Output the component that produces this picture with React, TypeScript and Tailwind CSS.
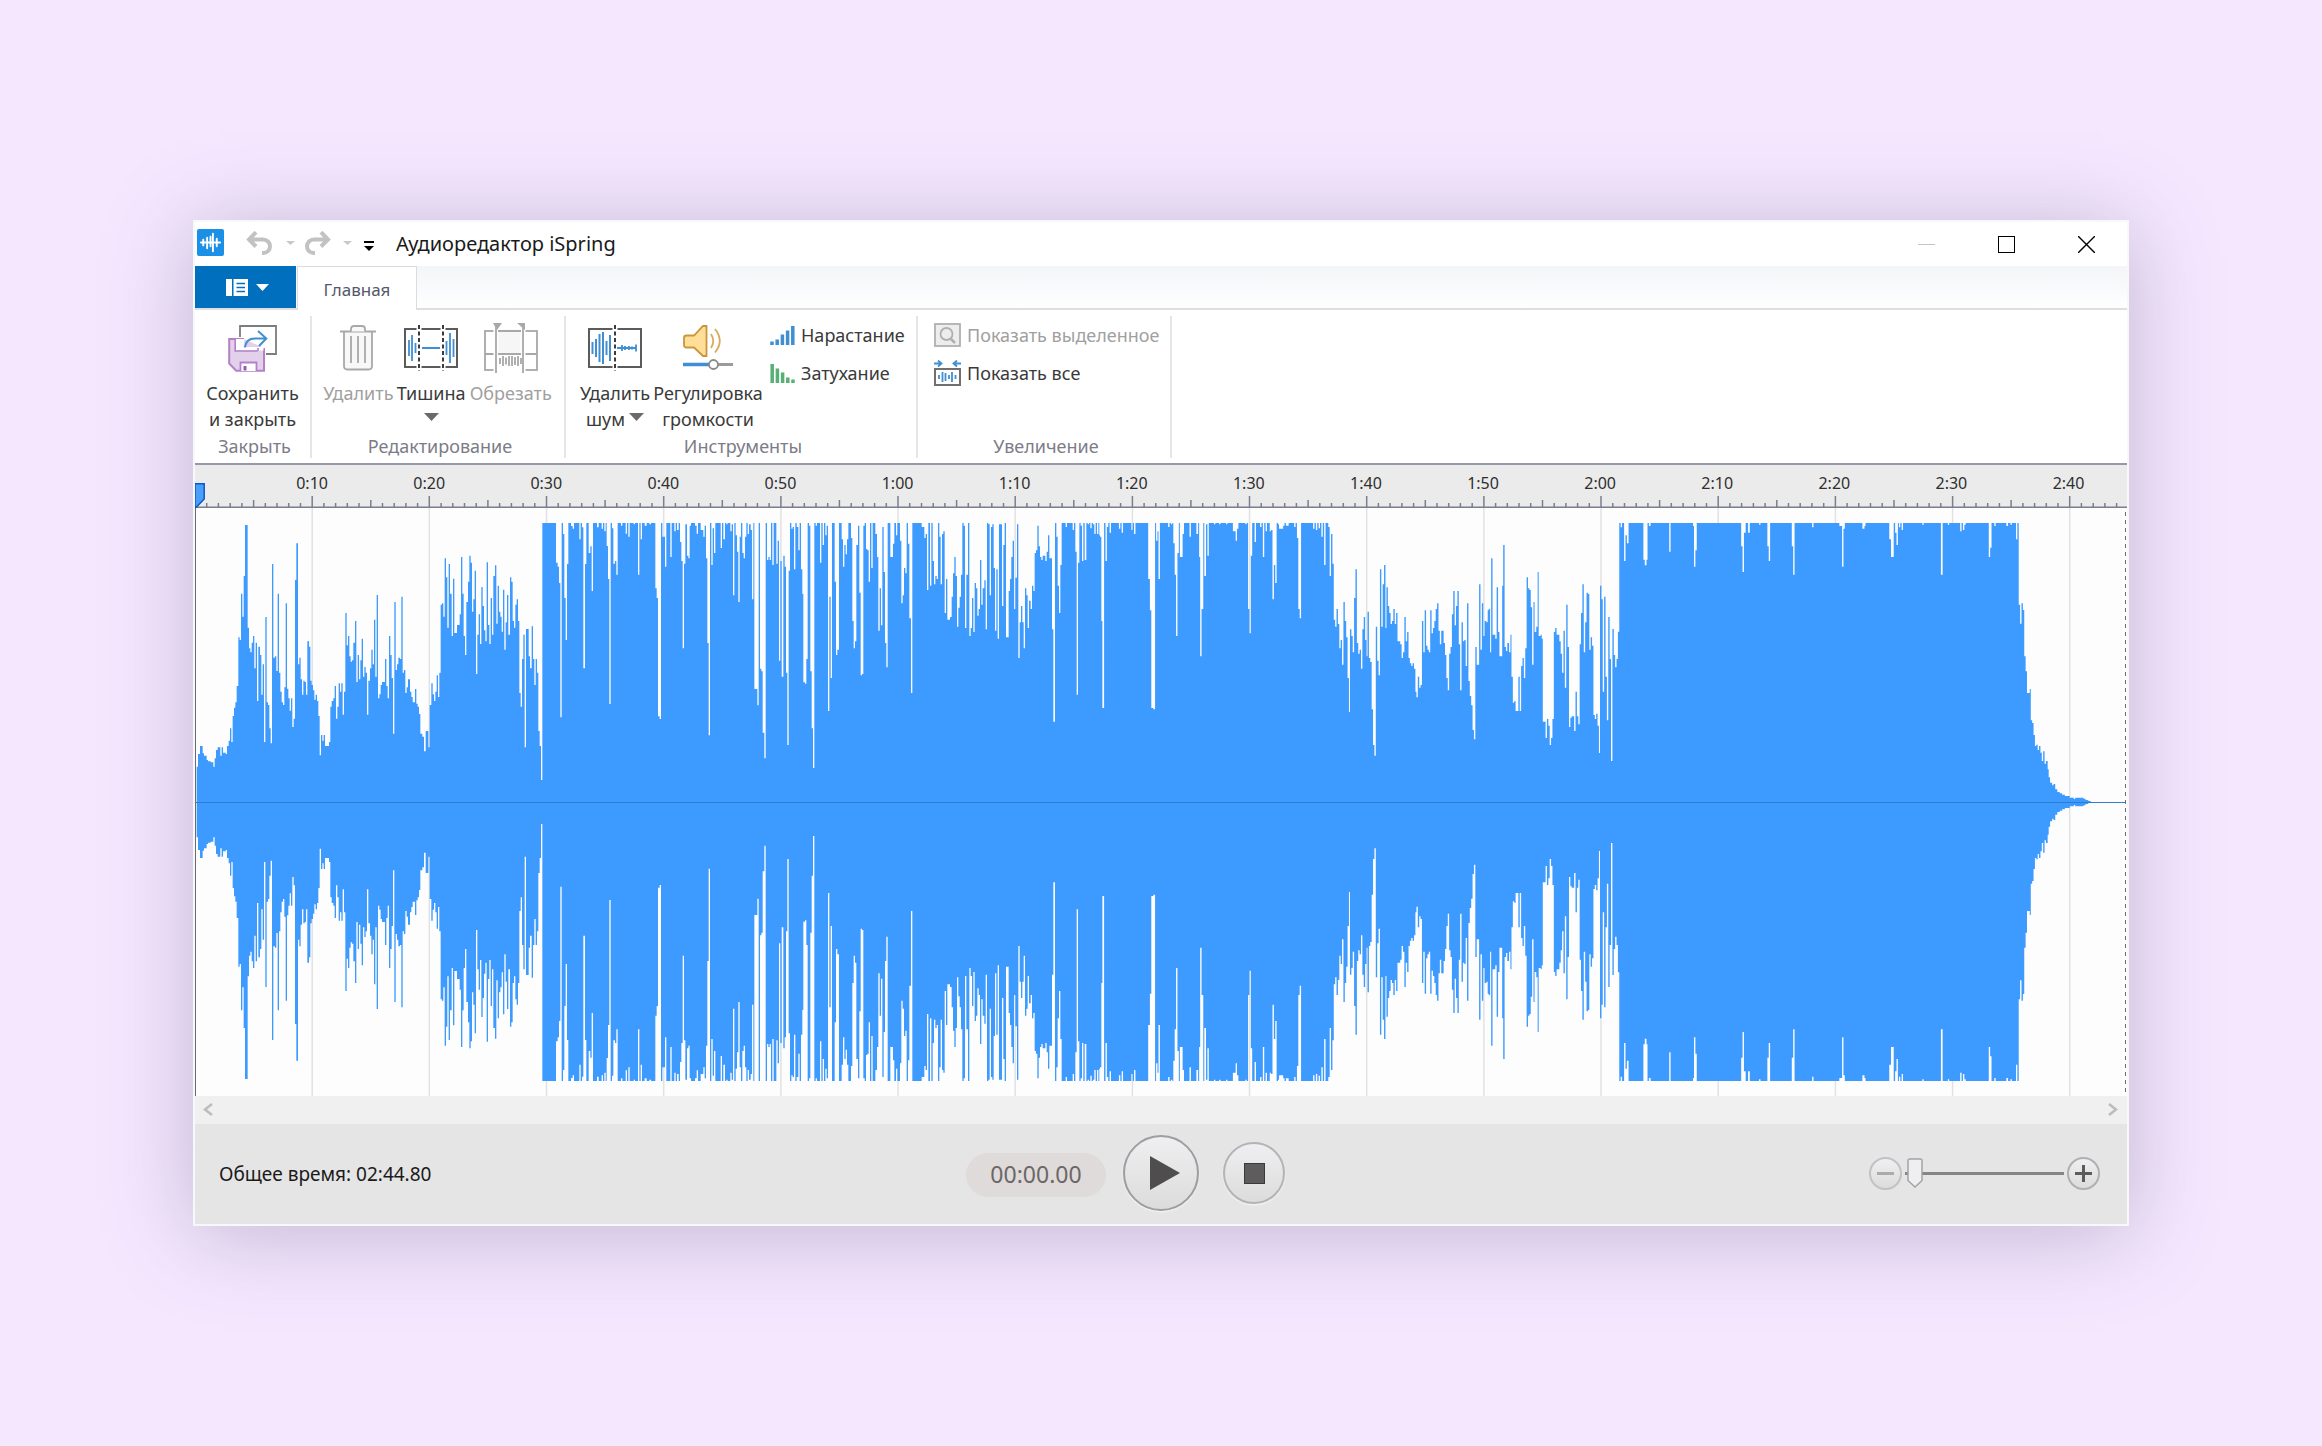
import { useState } from 'react';
import type { ReactNode } from 'react';
import clsx from 'clsx';

const DURATION = 164.8;
const WAVE_WIDTH = 1932;
const WAVE_HEIGHT = 588;
const PX_PER_SECOND = 11.717;
const CLIP_Y = 15;
const CENTER_Y = 294;

// Peaks are cached in blocks. Points are "x y" pairs; y grows from the clip level (top) to silence.
const PEAK_BLOCKS = [
  {
    start: -15,
    perPixel: 3,
    top: 249,
    points:
      '50 980 54 942 60 918 68 940 72 947 80 960 84 964 92 967 100 980 104 955 108 930 113 922 121 947 125 922 129 938 137 942 141 918 146 902 150 865 154 906 158 828 162 803 166 787 170 738 175 592 179 600 183 461 187 530 191 408 195 255 203 563 207 625 211 637 215 608 219 588 223 685 227 608 231 783 235 620 240 645 244 764 248 673 252 906 256 531 260 787 264 795 268 865 272 910 276 372 280 653 285 649 289 693 293 461 297 698 301 755 305 787 309 795 313 742 317 490 321 746 325 775 329 812 333 775 337 861 341 836 345 420 349 310 354 673 358 653 362 718 366 764 370 722 374 726 378 764 382 604 387 620 391 722 395 735 399 751 403 779 407 764 411 783 415 828 419 946 423 885 427 902 431 885 435 918 447 906 451 800 455 783 460 775 464 738 468 836 472 800 476 730 480 755 484 730 488 824 492 755 496 519 500 616 504 588 508 649 512 665 516 661 520 608 525 543 529 726 533 645 537 718 541 661 545 596 549 710 553 681 557 698 561 824 565 722 570 685 574 629 578 673 582 539 586 710 590 465 594 775 598 763 602 735 606 726 615 657 619 738 623 775 627 588 631 645 635 714 639 881 643 486 647 690 651 673 655 653 660 657 664 470 668 698 672 690 676 759 680 742 684 718 690 755 694 771 698 787 705 747 709 791 713 800 717 822 721 881 727 890 732 934 737 873 745 922 749 795 754 730 758 763 762 783 766 755 770 706 774 771 778 698 782 494 786 490 790 530 794 355 798 412 802 563 806 372 810 461 815 588 819 416 823 579 831 555 839 523 843 351 847 461 851 588 855 645 859 486 864 425 868 347 872 368 876 515 880 478 884 392 888 702 892 584 896 523 900 612 904 441 908 498 912 571 916 604 920 367 924 555 928 612 932 474 936 584 940 408 945 376 949 551 953 437 957 515 961 530 965 575 969 449 973 629 977 547 981 465 985 584 990 412 994 425 998 543 1002 563 1006 494 1010 478 1014 543 1018 759 1022 800 1026 657 1030 584 1034 922 1038 567 1046 649 1050 685 1055 559 1059 657 1063 735 1067 657 1071 698 1075 873 1079 918 1083 1020 1087 249 1128 368 1133 380 1137 429 1141 832 1145 249 1149 282 1153 474 1157 600 1161 372 1165 249 1173 258 1178 266 1182 249 1198 298 1202 249 1206 262 1210 685 1215 372 1219 249 1226 339 1231 319 1235 453 1239 249 1251 262 1256 249',
  },
  {
    start: 385,
    perPixel: 3,
    top: 69,
    points:
      '65 86 69 69 73 94 77 69 80 138 84 237 88 612 92 69 96 85 100 191 105 183 109 224 113 69 123 77 127 69 137 101 141 69 145 110 149 69 161 73 165 69 174 224 178 69 182 118 186 69 194 77 200 69 208 73 213 69 226 265 230 294 234 649 239 657 243 69 247 110 255 200 259 69 271 171 275 69 283 94 287 69 291 90 296 69 300 126 304 183 308 445 312 191 316 73 321 167 325 175 329 77 333 69 345 77 350 101 354 69 362 90 370 110 374 77 378 175 382 429 386 706 390 69 394 195 398 85 402 159 406 69 422 144 426 69 430 118 435 69 439 73 443 69 451 94 455 73 459 286 463 69 467 106 471 155 475 306 479 110 483 69 487 159 491 175 495 110 499 69 503 102 507 73 512 90 516 298 520 69 523 567 532 616 536 69 540 506 544 514 548 698 553 775 557 69 561 180 565 171 569 180 573 69 577 195 581 69 589 191 593 122 597 482 601 183 605 530 610 167 614 200 618 518 622 735 626 212 630 69 634 86 638 81 642 208 646 69 650 81 655 151 659 69 663 208 667 282 670 547 675 551 679 477 683 69 687 77 691 514 695 685 699 804 703 69 707 77 711 69 720 188 724 69 728 135 732 69 736 106 740 77 744 633 748 290 752 534 756 69 764 245 768 465 772 449 777 69 785 118 789 200 793 135 797 163 801 118 805 69 813 114 817 363 821 445 825 424 829 135 834 77 838 278 842 526 846 522 850 77 854 69 858 147 862 151 866 245 870 69 874 204 878 69 886 102 891 171 895 392 899 265 903 376 907 81 911 216 915 429 919 502 923 69 931 171 939 131 943 69 948 106 952 69 960 122 964 310 968 286 972 204 976 220 980 69 984 131 988 355 993 579 997 69 1025 81 1033 114 1037 102 1041 270 1045 69 1050 257 1054 69 1058 183 1062 253 1066 228 1070 237 1074 69 1078 110 1082 253 1086 102 1090 94 1094 339 1098 237 1102 359 1110 351 1115 290 1119 220 1123 171 1127 228 1131 380 1135 323 1139 290 1143 224 1147 69 1151 77 1155 384 1159 224 1164 69 1168 408 1172 384 1176 294 1180 396 1184 249 1188 265 1192 347 1196 327 1200 180 1204 314 1208 265 1213 241 1217 388 1221 69 1225 73 1229 286 1233 81 1237 73 1241 204 1245 392 1249 208 1253 416 1257 73 1266 318 1270 135 1274 69 1278 412 1286 273 1290 237 1294 171 1298 122 1302 327 1306 233 1311 73 1315 474 1319 367 1323 318 1327 367 1331 445 1335 265 1339 286 1343 384 1347 302 1352 327 1356 257 1360 273 1364 159 1368 151 1372 77 1376 139 1380 171 1384 180 1388 167 1396 183 1400 155 1404 106 1408 175 1416 388 1420 665 1425 69 1429 110 1433 257 1437 339 1441 195 1445 69 1457 81 1461 69 1478 90 1482 69 1486 155 1490 584 1494 188 1498 69 1502 77 1506 183 1510 69 1514 180 1519 69 1523 73 1527 69 1531 85 1535 69 1539 73 1543 102 1547 69 1551 102 1555 69 1558 106',
  },
  {
    start: 885,
    perPixel: 2.904,
    top: 69,
    points:
      '58 110 62 363 65 624 70 69 74 183 78 81 82 69 86 98 90 69 113 86 117 69 121 98 125 69 149 90 153 69 157 102 161 69 198 237 203 331 207 624 213 628 218 69 221 122 225 94 228 237 232 69 256 81 260 69 264 73 268 69 271 130 275 224 279 408 283 159 287 69 290 171 298 102 302 69 318 110 322 69 338 102 343 69 346 171 349 469 353 327 358 69 361 228 366 73 370 167 374 69 389 73 393 69 404 73 408 69 424 73 428 69 444 94 452 122 456 86 460 69 480 73 484 69 488 327 492 400 496 167 500 69 507 126 511 69 523 81 527 69 531 171 535 69 539 94 543 69 551 94 555 90 559 298 563 195 567 249 571 69 575 73 578 86 590 77 594 69 598 77 606 69 622 81 626 69 630 114 634 327 638 355 642 69 677 86 681 69 685 90 689 69 693 85 697 69 701 110 705 69 709 195 713 69 721 81 725 228 729 102 733 191 737 359 741 380 745 327 749 372 753 445 757 420 761 494 765 306 769 363 773 412 777 534 781 636 784 388 788 408 792 457 796 294 800 208 804 429 808 461 812 449 816 506 820 388 824 351 828 420 832 469 835 335 839 474 843 486 847 628 851 735 855 767 859 380 863 482 867 526 871 208 875 380 879 253 883 195 887 384 890 262 894 318 898 339 902 372 906 363 910 327 914 372 918 339 922 424 930 433 934 474 938 457 942 351 946 424 950 396 954 474 958 490 962 498 966 490 970 506 974 575 977 592 981 530 985 563 989 555 993 363 997 457 1001 331 1005 437 1009 449 1013 457 1017 331 1021 400 1025 384 1029 363 1033 327 1037 310 1041 392 1045 433 1049 392 1056 429 1060 465 1064 534 1068 571 1072 461 1076 441 1080 343 1084 273 1088 376 1092 318 1096 273 1100 433 1104 571 1108 367 1112 424 1116 420 1120 498 1124 310 1128 543 1132 588 1136 616 1140 690 1144 718 1148 441 1152 494 1159 253 1163 449 1167 310 1171 408 1175 363 1180 367 1184 331 1187 327 1191 457 1194 175 1198 404 1206 416 1210 262 1214 396 1218 469 1226 257 1229 135 1233 441 1237 453 1241 429 1246 457 1250 404 1253 530 1257 608 1261 604 1265 633 1273 530 1277 633 1281 498 1285 474 1289 534 1293 445 1297 232 1301 265 1305 270 1309 322 1313 494 1317 306 1320 396 1325 380 1329 216 1332 408 1338 404 1341 416 1344 665 1352 714 1356 657 1360 677 1364 735 1368 714 1372 657 1376 396 1380 384 1384 404 1392 424 1396 461 1400 518 1404 392 1408 563 1412 314 1416 441 1420 681 1424 653 1428 649 1435 693 1439 575 1443 649 1447 673 1451 433 1455 339 1459 253 1463 457 1467 367 1471 278 1475 282 1479 449 1483 412 1487 437 1491 645 1495 657 1499 641 1503 677 1507 759',
  },
  {
    start: 1405,
    perPixel: 2.904,
    top: 249,
    points:
      '0 437 4 478 8 755 12 470 16 710 20 841 24 531 28 657 32 963 36 567 40 645 44 682 48 657 52 575 56 249 60 262 64 249 70 363 74 286 78 310 83 249 126 359 130 376 135 359 138 249 142 258 147 249 201 335 205 249 270 258 273 380 277 331 281 249 410 319 414 396 418 278 423 249 430 278 435 249 462 254 466 249 486 319 490 363 494 249 557 319 561 404 565 249 616 262 620 249 695 258 703 380 707 266 711 249 762 266 768 258 771 249 840 298 845 351 853 249 857 278 861 315 865 249 868 262 872 249 876 270 880 249 936 254 940 249 990 404 995 249 1010 254 1014 249 1046 274 1050 249 1054 270 1058 254 1062 249 1129 351 1133 323 1137 249 1145 258 1149 249 1180 258 1185 249 1192 254 1196 249 1208 298 1212 249 1216 494 1220 551 1224 490 1228 510 1232 649 1236 694 1240 759 1248 747 1251 841 1255 849 1259 885 1263 918 1267 914 1271 930 1275 918 1279 938 1283 963 1287 934 1291 971 1295 963 1300 988 1303 1012 1307 1028 1313 1036 1317 1032 1322 1048 1328 1056 1335 1060 1342 1064 1350 1068 1364 1073 1376 1077 1380 1073 1404 1076 1410 1080 1418 1083 1425 1087',
  },
];

const buildWavePath = (direction: 1 | -1) => {
  let d = '';
  for (const block of PEAK_BLOCKS) {
    const values = block.points.split(' ').map(Number);
    for (let i = 0; i < values.length; i += 2) {
      const x = (block.start + values[i] / block.perPixel).toFixed(2);
      const depth = (values[i + 1] - block.top) / 3;
      const height = Math.max(0, CENTER_Y - CLIP_Y - depth);
      const y = (CENTER_Y - direction * height).toFixed(2);
      d += d ? `H${x}V${y}` : `M${x} ${CENTER_Y}V${y}`;
    }
  }
  return `${d}V${CENTER_Y}Z`;
};

const WAVE_TOP = buildWavePath(1);
const WAVE_BOTTOM = buildWavePath(-1);

const SECONDS = Array.from({ length: 164 }, (_, i) => i + 1);
const TENS = SECONDS.filter((s) => s % 10 === 0);

const formatLabel = (s: number) => `${Math.floor(s / 60)}:${String(s % 60).padStart(2, '0')}`;

const bars = (items: number[][], cy: number) =>
  items.map(([x, h]) => `M${x} ${cy - h}V${cy + h}`).join('');

/* ---------- icons ---------- */

const AppIcon = () => (
  <svg viewBox="0 0 28 28" className="w-[27px] h-[27px]">
    <rect width="28" height="28" rx="2" fill="#1c90e6" />
    <path
      d="M4 14h20M6.500 11v6M10.500 9v11M14 8v10M16.500 5v18M20.500 10v8"
      stroke="#fff"
      strokeWidth="2"
      strokeLinecap="round"
    />
  </svg>
);

const UndoIcon = ({ flip = false }: { flip?: boolean }) => (
  <svg viewBox="0 0 26 24" className={clsx('w-[26px] h-6', flip && '-scale-x-100')} fill="none" stroke="#c2c2c2" strokeWidth="4">
    <path d="M10 1.200 3 8.500l7 7M3 8.500H17c4 0 7 3 7 6.800s-3 6.700-7 6.700h-1" />
  </svg>
);

const Triangle = ({ className }: { className: string }) => (
  <svg viewBox="0 0 14 8" preserveAspectRatio="none" className={className} fill="currentColor">
    <path d="M0 0h14L7 8z" />
  </svg>
);

const SaveIcon = () => (
  <svg viewBox="0 0 49 47" className="w-[49px] h-[47px]" fill="none">
    <path d="M12 12V1h36v28H38" stroke="#7d7d7d" strokeWidth="1.800" />
    <path d="M16 14H1.200v24.500l7 7.300H36V23" fill="#e3d0ea" stroke="#b381c8" strokeWidth="2" />
    <path d="M7.500 14h9l-1 8h20v3.500h-28z" fill="#fff" />
    <path d="M7.200 14v12h22.500" stroke="#b381c8" strokeWidth="1.600" />
    <path d="M30 23v3" stroke="#b381c8" strokeWidth="1.600" />
    <path d="M12.500 46v-8.500h16V46" fill="#fff" stroke="#b381c8" strokeWidth="1.800" />
    <path d="M15.500 41h3v4.500h-3z" fill="#8f5fae" />
    <path d="M17 22.500c.6-6 4-9 10-9H38M30 6l8.300 7.500L31 21" stroke="#3f8fd2" strokeWidth="2" />
  </svg>
);

const TrashIcon = () => (
  <svg viewBox="0 0 36 46" className="w-9 h-[46px]" fill="none" stroke="#a8a8a8" strokeWidth="1.800">
    <path d="M4 6.500v34.500q0 3.500 3.500 3.500h21q3.500 0 3.500-3.500V6.500" fill="#f8f8f8" />
    <path d="M0 6.500h36" strokeWidth="2" />
    <path d="M11 6.500V4q0-3 3-3h8q3 0 3 3v2.500" fill="#f8f8f8" />
    <path d="M11 11v27M18 11v27M25 11v27" />
  </svg>
);

const SilenceIcon = () => (
  <svg viewBox="0 0 54 48" className="w-[54px] h-12" fill="none">
    <rect x="1" y="5" width="52" height="38" stroke="#5b5b5b" strokeWidth="2" />
    <path d="M15 0v48M39 0v48" stroke="#fff" strokeWidth="5" />
    <path d="M15 1v46M39 1v46" stroke="#3c3c3c" strokeWidth="2" strokeDasharray="4 2.500" />
    <path d={bars([[5, 8], [8, 13], [11.5, 5], [42.5, 7], [46, 15], [49.500, 9]], 24)} stroke="#3f8fd2" strokeWidth="1.800" />
    <path d="M18 24h18" stroke="#3f8fd2" strokeWidth="2" />
  </svg>
);

const CropIcon = () => (
  <svg viewBox="0 0 54 50" className="w-[54px] h-[50px]" fill="none" stroke="#a8a8a8" strokeWidth="1.800">
    <rect x="1" y="8" width="52" height="39" />
    <path d="M1 31h52" />
    <path d="M12 4v43h27V4z" fill="#f6f6f6" stroke="#fff" strokeWidth="5" />
    <path d="M12 31h27v16H12z" fill="#fff" stroke="none" />
    <path d="M12 4v46M39 4v46M14 8h23M14 31h23" />
    <path d="M9 0h9l-5 7zM33 0h8v7z" fill="#a8a8a8" stroke="none" />
    <path d={bars([[16, 3], [19, 5], [22, 3.5], [25, 5], [28, 5], [31, 4], [34, 5], [37, 3]], 38)} />
  </svg>
);

const DenoiseIcon = () => (
  <svg viewBox="0 0 54 48" className="w-[54px] h-12" fill="none">
    <rect x="1" y="5" width="52" height="38" stroke="#5b5b5b" strokeWidth="2" />
    <path d="M27 0v48" stroke="#fff" strokeWidth="5" />
    <path d="M27 1v46" stroke="#3c3c3c" strokeWidth="2" strokeDasharray="4 2.500" />
    <path d={bars([[4.5, 6], [8, 9], [11.5, 14], [15, 16], [18.500, 7], [22, 13]], 24)} stroke="#3f8fd2" strokeWidth="2" />
    <path d={`M29 24h19${bars([[34, 3], [37, 2], [41, 2], [44, 1.500], [48, 3.500]], 24)}`} stroke="#3f8fd2" strokeWidth="1.800" />
  </svg>
);

const VolumeIcon = () => (
  <svg viewBox="0 0 50 46" className="w-[50px] h-[46px]" fill="none">
    <path
      d="M1 13q0-2.500 2.500-2.500H11L20 1h3.500v30H20l-9-8.500H3.500Q1 22.500 1 20z"
      fill="#ffdf98"
      stroke="#c9953f"
      strokeWidth="1.800"
    />
    <path d="M28 9q4.500 7 0 14M32 4q9.500 12 0 23.500" stroke="#d9a95c" strokeWidth="1.800" />
    <path d="M0 39.500h26" stroke="#3f8fd2" strokeWidth="3.500" />
    <path d="M34 39.500h16" stroke="#9b9b9b" strokeWidth="3" />
    <circle cx="30.500" cy="39.500" r="4.500" fill="#fff" stroke="#8a8a8a" strokeWidth="1.800" />
  </svg>
);

const FadeIcon = ({ out = false }: { out?: boolean }) => (
  <svg viewBox="0 0 25 19" className={clsx('w-[25px] h-[19px]', out && '-scale-x-100')} stroke={out ? '#57b074' : '#3f8fd2'} strokeWidth="3.500">
    <path d="M2 19v-3.500M7.200 19v-5.500M12.400 19V8.500M17.600 19V4.500M22.800 19V0" />
  </svg>
);

const ZoomSelectionIcon = () => (
  <svg viewBox="0 0 27 24" className="w-[27px] h-6" fill="#ededed" stroke="#b0b0b0" strokeWidth="1.800">
    <rect x="1" y="1" width="25" height="22" />
    <circle cx="12.500" cy="11" r="6" />
    <path d="M16.500 15.500 21 20" strokeWidth="2.500" />
  </svg>
);

const ZoomAllIcon = () => (
  <svg viewBox="0 0 27 26" className="w-[27px] h-[26px]" fill="none" stroke="#3f8fd2" strokeWidth="1.800">
    <path d="M0 3.500h7M4 .5l3.500 3L4 6.500M27 3.500h-7M23 .5l-3.500 3 3.500 3" />
    <rect x="1" y="9" width="25" height="16" stroke="#707070" strokeWidth="2" />
    <path d={bars([[5, 2], [8.500, 5], [11.500, 4], [15, 2], [18, 5], [21.500, 2]], 17)} />
  </svg>
);

/* ---------- ribbon ---------- */

const LargeButton = ({
  icon,
  lines,
  className,
  disabled,
  arrow,
}: {
  icon: ReactNode;
  lines: string[];
  className: string;
  disabled?: boolean;
  arrow?: boolean;
}) => (
  <button
    type="button"
    disabled={disabled}
    className={clsx('flex flex-col items-center whitespace-nowrap', disabled ? 'text-[#a0a0a0]' : 'text-[#3a3a3a]', className)}
  >
    <span className="h-16 flex items-center justify-center">{icon}</span>
    <span className="leading-[26px]">{lines[0]}</span>
    <span className="leading-[26px] h-[26px] flex items-center gap-1">
      {lines[1]}
      {arrow && <Triangle className="w-[15px] h-2 mb-1 text-[#6b6b6b]" />}
    </span>
  </button>
);

const SmallButton = ({ icon, label, disabled }: { icon: ReactNode; label: string; disabled?: boolean }) => (
  <button
    type="button"
    disabled={disabled}
    className={clsx('h-[38px] flex items-center gap-[6px] whitespace-nowrap', disabled ? 'text-[#a0a0a0]' : 'text-[#3a3a3a]')}
  >
    {icon}
    {label}
  </button>
);

const Group = ({ title, className, children }: { title: string; className: string; children: ReactNode }) => (
  <section className={clsx('flex flex-col justify-between border-r-2 border-[#e6e6e6]', className)} aria-label={title}>
    <div className="flex px-[11px]">{children}</div>
    <h2 className="pl-1 text-center leading-6 text-[#7c7c88]">{title}</h2>
  </section>
);

const Ribbon = () => (
  <div className="h-[153px] flex pt-1.5 pb-[5px] bg-white text-[18px]">
    <Group title="Закрыть" className="w-[117px]">
      <LargeButton icon={<SaveIcon />} lines={['Сохранить', 'и закрыть']} className="w-[98px]" />
    </Group>
    <Group title="Редактирование" className="w-[254px]">
      <LargeButton icon={<TrashIcon />} lines={['Удалить']} className="w-[72px]" disabled />
      <LargeButton icon={<SilenceIcon />} lines={['Тишина']} className="w-[76px]" arrow />
      <LargeButton icon={<CropIcon />} lines={['Обрезать']} className="w-[86px]" disabled />
    </Group>
    <Group title="Инструменты" className="w-[352px]">
      <LargeButton icon={<DenoiseIcon />} lines={['Удалить', 'шум']} className="w-[76px]" arrow />
      <LargeButton icon={<VolumeIcon />} lines={['Регулировка', 'громкости']} className="w-[110px]" />
      <div className="flex flex-col pl-[7px]">
        <SmallButton icon={<FadeIcon />} label="Нарастание" />
        <SmallButton icon={<FadeIcon out />} label="Затухание" />
      </div>
    </Group>
    <Group title="Увеличение" className="w-[254px]">
      <div className="flex flex-col pl-[5px]">
        <SmallButton icon={<ZoomSelectionIcon />} label="Показать выделенное" disabled />
        <SmallButton icon={<ZoomAllIcon />} label="Показать все" />
      </div>
    </Group>
  </div>
);

/* ---------- title bar ---------- */

const TitleBar = () => (
  <header className="h-11 pr-px flex items-center bg-white">
    <div className="flex items-center pl-[2px] pr-[22px] pb-[3px]">
      <AppIcon />
      <button type="button" aria-label="Отменить" disabled className="ml-[22px]">
        <UndoIcon />
      </button>
      <Triangle className="w-[9px] h-1 ml-[14px] text-[#c9c9c9]" />
      <button type="button" aria-label="Повторить" disabled className="ml-[10px]">
        <UndoIcon flip />
      </button>
      <Triangle className="w-[9px] h-1 ml-[12px] text-[#c9c9c9]" />
      <button type="button" aria-label="Настройка панели" className="ml-3 flex flex-col items-center gap-[3px] pt-[6px]">
        <span className="w-[10px] h-[2px] bg-black" />
        <Triangle className="w-[10px] h-[5px] text-black" />
      </button>
    </div>
    <h1 className="flex-1 text-[20px] text-[#1a1a1a]">Аудиоредактор iSpring</h1>
    <button type="button" aria-label="Свернуть" className="w-20 h-full flex items-center justify-center">
      <span className="w-[17px] h-px bg-[#c4c4c4]" />
    </button>
    <button type="button" aria-label="Развернуть" className="w-20 h-full flex items-center justify-center">
      <span className="w-[17px] h-[17px] border border-black" />
    </button>
    <button type="button" aria-label="Закрыть окно" className="w-20 h-full flex items-center justify-center">
      <svg viewBox="0 0 17 17" className="w-[17px] h-[17px]" stroke="#000" strokeWidth="1.400">
        <path d="M0 0l17 17M17 0L0 17" />
      </svg>
    </button>
  </header>
);

const TabRow = () => (
  <nav className="h-11 flex items-start bg-gradient-to-b from-[#f3f5f8] to-white shadow-[inset_0_-2px_0_#dfdfdf]">
    <button type="button" aria-label="Файл" className="w-[101px] h-[42px] pl-1 flex items-center justify-center gap-2 bg-[#006fbe] text-white">
      <svg viewBox="0 0 22 17" className="w-[22px] h-[17px]">
        <path d="M0 0h6v17H0zM7.500 0H22v17H7.500z" fill="#fff" />
        <path d="M10.500 4.500H19M10.500 8.500H19M10.500 12.500H19" stroke="#006fbe" strokeWidth="1.400" />
      </svg>
      <Triangle className="w-[13px] h-[7px]" />
    </button>
    <button type="button" className="w-[120px] h-11 pt-0.5 ml-px border border-b-0 border-[#dcdcdc] bg-white text-[17px] text-[#55586a]">
      Главная
    </button>
  </nav>
);

/* ---------- timeline ---------- */

const Ruler = () => {
  const step = (10 * PX_PER_SECOND * 100) / WAVE_WIDTH;
  return (
    <div className="relative h-[45px] border-t-2 border-[#9799ab] bg-[#ebebeb]">
      <svg
        viewBox={`0 0 ${WAVE_WIDTH} 43`}
        preserveAspectRatio="none"
        className="absolute inset-0 w-full h-[43px]"
        stroke="#7b7e8c"
        strokeWidth="1.500"
      >
        {SECONDS.map((s) => {
          const x = s * PX_PER_SECOND;
          const height = s % 10 === 0 ? 12 : s % 5 === 0 ? 8 : 5;
          return <path key={s} d={`M${x.toFixed(1)} 43v-${height}`} />;
        })}
        <path d="M0 42.250H1932" />
      </svg>
      <div className="relative flex pt-2 text-base leading-5 text-[#2f2f2f]">
        <span style={{ width: `${step / 2}%` }} />
        {TENS.map((s) => (
          <span key={s} className="text-center" style={{ width: `${step}%` }}>
            {formatLabel(s)}
          </span>
        ))}
      </div>
      <svg viewBox="0 0 10 25" className="absolute left-0 bottom-0 w-[10px] h-[25px]">
        <path d="M0 .8H9.200V16L1 24.500H0z" fill="#4a9ffb" stroke="#0b57c8" strokeWidth="1.500" />
      </svg>
    </div>
  );
};

const Waveform = () => (
  <svg
    viewBox={`0 0 ${WAVE_WIDTH} ${WAVE_HEIGHT}`}
    preserveAspectRatio="none"
    className="block w-full h-[588px] bg-[#fdfdfd]"
    role="img"
    aria-label="Форма волны"
  >
    {TENS.map((s) => (
      <path key={s} d={`M${(s * PX_PER_SECOND).toFixed(1)} 0V${WAVE_HEIGHT}`} stroke="#e2e2e2" strokeWidth="1.500" />
    ))}
    <path d={WAVE_TOP} fill="#3d9aff" />
    <path d={WAVE_BOTTOM} fill="#3d9aff" />
    <path d={`M0 294.500H${DURATION * PX_PER_SECOND}`} stroke="#2f7dcc" />
    <path d={`M.5 0V${WAVE_HEIGHT}`} stroke="#6c6c6c" />
    <path d={`M1930.500 4V${WAVE_HEIGHT}`} stroke="#6c6c6c" strokeDasharray="4 4" />
  </svg>
);

const ScrollBar = () => (
  <div className="h-7 flex items-center justify-between pl-2 pr-[9px] pb-px bg-[#f0f0f0] text-[#bcbcbc]">
    <button type="button" aria-label="Влево">
      <svg viewBox="0 0 10 13" className="w-[10px] h-[13px]" fill="none" stroke="currentColor" strokeWidth="2.500">
        <path d="M9 1 2 6.500 9 12" />
      </svg>
    </button>
    <button type="button" aria-label="Вправо">
      <svg viewBox="0 0 10 13" className="w-[10px] h-[13px]" fill="none" stroke="currentColor" strokeWidth="2.500">
        <path d="m1 1 7 5.500L1 12" />
      </svg>
    </button>
  </div>
);

/* ---------- footer ---------- */

const ROUND = 'flex items-center justify-center rounded-full border-2 bg-gradient-to-b from-[#efeff1] to-[#dcdcdc]';

const ZoomSlider = () => {
  const [zoom, setZoom] = useState(0);

  return (
    <div className="flex items-center gap-[3px]">
      <button
        type="button"
        aria-label="Уменьшить"
        disabled={zoom === 0}
        onClick={() => setZoom(Math.max(0, zoom - 10))}
        className={clsx(ROUND, 'w-[33px] h-[33px] border-[#c2c2c6] text-[#ababab]')}
      >
        <span className="w-[17px] h-[3px] bg-current" />
      </button>
      <div className="relative w-[159px] h-[30px] flex items-center">
        <div className="w-full h-[3px] bg-[#858585]" />
        <svg
          viewBox="0 0 16 30"
          className="absolute top-0 w-4 h-[30px]"
          style={{ left: `${1 + zoom * 0.9}%` }}
          fill="#efeff1"
          stroke="#a3a3a8"
          strokeWidth="1.500"
        >
          <path d="M1 3q0-2 2-2h10q2 0 2 2v19.500l-7 6.500-7-6.500z" />
        </svg>
        <input
          type="range"
          aria-label="Масштаб"
          min={0}
          max={100}
          value={zoom}
          onChange={(e) => setZoom(Number(e.target.value))}
          className="absolute inset-0 w-full h-full opacity-0 cursor-pointer"
        />
      </div>
      <button
        type="button"
        aria-label="Увеличить"
        onClick={() => setZoom(Math.min(100, zoom + 10))}
        className={clsx(ROUND, 'w-[33px] h-[33px] border-[#b0b0b4]')}
      >
        <svg viewBox="0 0 17 17" className="w-[17px] h-[17px]" stroke="#5c5c5c" strokeWidth="3">
          <path d="M0 8.500h17M8.500 0v17" />
        </svg>
      </button>
    </div>
  );
};

const Footer = () => {
  const [playing, setPlaying] = useState(false);

  return (
    <footer className="h-[100px] pb-[2px] grid grid-cols-[1fr_auto_1fr] items-center bg-[#e5e5e5]">
      <div className="flex items-center justify-between pt-[3px] pl-6 pr-[17px]">
        <p className="text-[19px] text-[#1a1a1a]">Общее время: 02:44.80</p>
        <output className="w-[140px] h-11 flex items-center justify-center rounded-full bg-[#dfdbda] text-[23px] text-[#6b6767]">
          00:00.00
        </output>
      </div>
      <button
        type="button"
        aria-label={playing ? 'Пауза' : 'Воспроизвести'}
        onClick={() => setPlaying(!playing)}
        className={clsx(ROUND, 'w-[76px] h-[76px] border-[#9d9da2] shadow-[0_1px_2px_#f8f8f8]')}
      >
        <svg viewBox="0 0 30 34" className="w-[30px] h-[34px] ml-2">
          <path d={playing ? 'M0 0h9v34H0zM18 0h9v34h-9z' : 'M0 0l30 17L0 34z'} fill="#4f4d4d" />
        </svg>
      </button>
      <div className="flex items-center justify-between pl-6 pr-[27px]">
        <button
          type="button"
          aria-label="Стоп"
          onClick={() => setPlaying(false)}
          className={clsx(ROUND, 'w-[62px] h-[62px] border-[#b4b4b8] shadow-[0_1px_2px_#f8f8f8]')}
        >
          <span className="w-[21px] h-[21px] bg-[#5e5c5c] border border-[#3a3a3a]" />
        </button>
        <ZoomSlider />
      </div>
    </footer>
  );
};

export default function App() {
  return (
    <div className="min-h-screen flex items-center px-[193px] bg-[#f4e7fe] font-['Noto_Sans','Open_Sans',sans-serif]">
      <main className="w-full border-2 border-[#f8f8fa] bg-white shadow-[0_8px_80px_rgba(100,90,130,0.34)]">
        <TitleBar />
        <TabRow />
        <Ribbon />
        <Ruler />
        <Waveform />
        <ScrollBar />
        <Footer />
      </main>
    </div>
  );
}
